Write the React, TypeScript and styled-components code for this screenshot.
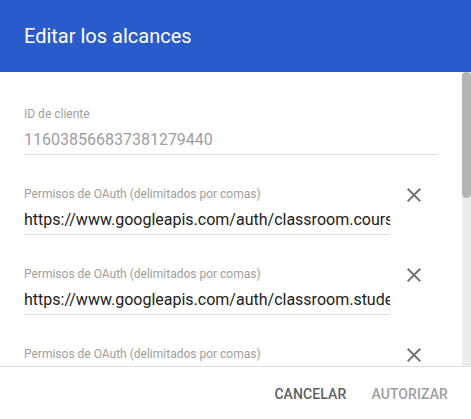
import React from "react";
import styled, { createGlobalStyle } from "styled-components";

const GlobalStyle = createGlobalStyle`
  html, body { margin: 0; padding: 0; height: 100%; }
  body { font-family: Roboto, "Noto Sans", Arial, sans-serif; background: #fff; }
  #root { height: 100%; }
  * { box-sizing: border-box; }
`;

const Dialog = styled.div`
  display: flex;
  flex-direction: column;
  height: 100vh;
  width: 100%;
  background: #fff;
`;

const Header = styled.header`
  flex: 0 0 72px;
  display: flex;
  align-items: center;
  padding: 0 24px;
  background: #2a5bcd;
`;

const Title = styled.h1`
  margin: 0;
  font-size: 20px;
  line-height: 24px;
  font-weight: 400;
  color: #fff;
`;

const Main = styled.div`
  flex: 1 1 auto;
  min-height: 0;
  display: flex;
`;

const Content = styled.div`
  flex: 1 1 auto;
  min-width: 0;
  overflow: hidden;
  padding: 34px 24px 24px;
  display: flex;
  flex-direction: column;
  gap: 31px;
`;

const ScrollTrack = styled.div`
  flex: 0 0 9px;
  background: #ececec;
  display: flex;
  flex-direction: column;
`;

const ScrollThumb = styled.div<{ $size: number }>`
  flex: 0 0 ${(p) => p.$size}px;
  background: #b4b4b4;
  border-radius: 5px;
`;

const Row = styled.div`
  display: flex;
  align-items: flex-start;
`;

const Field = styled.label`
  flex: 1 1 auto;
  min-width: 0;
  display: flex;
  flex-direction: column;
  gap: 6px;
  border-bottom: 1px solid #e0e0e0;
  padding-bottom: 2px;
`;

const Label = styled.span`
  font-size: 12px;
  line-height: 16px;
  color: #9e9e9e;
`;

const Input = styled.input<{ $disabled?: boolean }>`
  display: block;
  width: 100%;
  border: 0;
  padding: 0;
  margin: 0;
  outline: none;
  background: transparent;
  font-family: Roboto, "Noto Sans", Arial, sans-serif;
  font-size: 16px;
  line-height: 24px;
  height: 24px;
  color: ${(p) => (p.$disabled ? "#9e9e9e" : "#212121")};
`;

const RemoveButton = styled.button`
  flex: 0 0 48px;
  height: 24px;
  margin-top: -3px;
  padding: 0;
  border: 0;
  background: transparent;
  display: flex;
  align-items: center;
  justify-content: center;
  cursor: pointer;
`;

const Footer = styled.footer`
  flex: 0 0 53px;
  border-top: 1px solid #e0e0e0;
  display: flex;
  justify-content: flex-end;
  align-items: flex-start;
  gap: 9px;
  padding: 9px 15px 0;
`;

const TextButton = styled.button<{ $disabled?: boolean }>`
  height: 36px;
  min-width: 64px;
  padding: 0 8px;
  border: 0;
  background: transparent;
  font-family: Roboto, "Noto Sans", Arial, sans-serif;
  font-size: 14px;
  font-weight: 500;
  letter-spacing: 0.1px;
  text-transform: uppercase;
  color: ${(p) => (p.$disabled ? "#9e9e9e" : "#616161")};
  cursor: pointer;
`;

const CloseIcon = () => (
  <svg width="24" height="24" viewBox="0 0 24 24" aria-hidden="true">
    <path
      fill="#757575"
      d="M19 6.41L17.59 5 12 10.59 6.41 5 5 6.41 10.59 12 5 17.59 6.41 19 12 13.41 17.59 19 19 17.59 13.41 12z"
    />
  </svg>
);

const scopes = [
  "https://www.googleapis.com/auth/classroom.courses",
  "https://www.googleapis.com/auth/classroom.student-submissions.students.readonly",
  "https://www.googleapis.com/auth/classroom.rosters",
];

export default function App() {
  return (
    <>
      <GlobalStyle />
      <Dialog>
        <Header>
          <Title>Editar los alcances</Title>
        </Header>
        <Main>
          <Content>
            <Field>
              <Label>ID de cliente</Label>
              <Input $disabled readOnly value="116038566837381279440" />
            </Field>
            {scopes.map((s) => (
              <Row key={s}>
                <Field>
                  <Label>Permisos de OAuth (delimitados por comas)</Label>
                  <Input readOnly value={s} />
                </Field>
                <RemoveButton aria-label="Quitar">
                  <CloseIcon />
                </RemoveButton>
              </Row>
            ))}
          </Content>
          <ScrollTrack>
            <ScrollThumb $size={126} />
          </ScrollTrack>
        </Main>
        <Footer>
          <TextButton>Cancelar</TextButton>
          <TextButton $disabled>Autorizar</TextButton>
        </Footer>
      </Dialog>
    </>
  );
}
